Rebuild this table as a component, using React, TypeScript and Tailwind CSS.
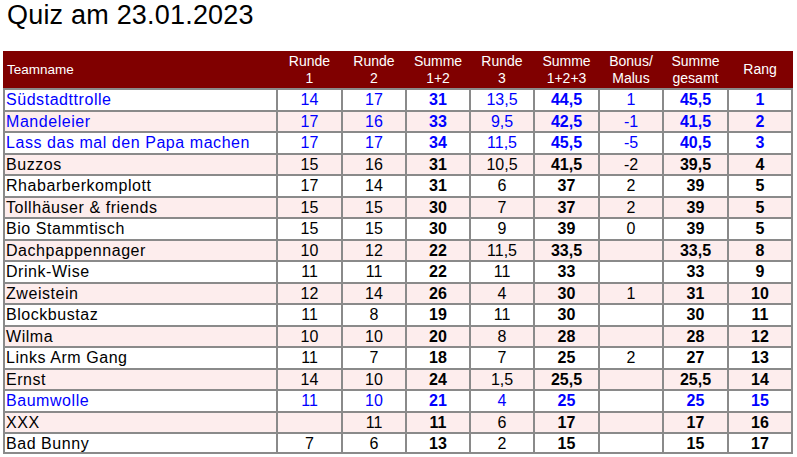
const rows: { name: string; v: string[]; blue?: boolean }[] = [
  { name: "Südstadttrolle", v: ["14", "17", "31", "13,5", "44,5", "1", "45,5", "1"], blue: true },
  { name: "Mandeleier", v: ["17", "16", "33", "9,5", "42,5", "-1", "41,5", "2"], blue: true },
  { name: "Lass das mal den Papa machen", v: ["17", "17", "34", "11,5", "45,5", "-5", "40,5", "3"], blue: true },
  { name: "Buzzos", v: ["15", "16", "31", "10,5", "41,5", "-2", "39,5", "4"] },
  { name: "Rhabarberkomplott", v: ["17", "14", "31", "6", "37", "2", "39", "5"] },
  { name: "Tollhäuser & friends", v: ["15", "15", "30", "7", "37", "2", "39", "5"] },
  { name: "Bio Stammtisch", v: ["15", "15", "30", "9", "39", "0", "39", "5"] },
  { name: "Dachpappennager", v: ["10", "12", "22", "11,5", "33,5", "", "33,5", "8"] },
  { name: "Drink-Wise", v: ["11", "11", "22", "11", "33", "", "33", "9"] },
  { name: "Zweistein", v: ["12", "14", "26", "4", "30", "1", "31", "10"] },
  { name: "Blockbustaz", v: ["11", "8", "19", "11", "30", "", "30", "11"] },
  { name: "Wilma", v: ["10", "10", "20", "8", "28", "", "28", "12"] },
  { name: "Links Arm Gang", v: ["11", "7", "18", "7", "25", "2", "27", "13"] },
  { name: "Ernst", v: ["14", "10", "24", "1,5", "25,5", "", "25,5", "14"] },
  { name: "Baumwolle", v: ["11", "10", "21", "4", "25", "", "25", "15"], blue: true },
  { name: "XXX", v: ["", "11", "11", "6", "17", "", "17", "16"] },
  { name: "Bad Bunny", v: ["7", "6", "13", "2", "15", "", "15", "17"] },
];

const headers = [
  ["Runde", "1"],
  ["Runde", "2"],
  ["Summe", "1+2"],
  ["Runde", "3"],
  ["Summe", "1+2+3"],
  ["Bonus/", "Malus"],
  ["Summe", "gesamt"],
  ["Rang"],
];

// bold: Summe-Spalten und Rang
const boldCols = [2, 4, 6, 7];
const cols = "grid grid-cols-[275px_65px_64px_64px_64px_65px_64px_65px_64px]";

export default function App() {
  return (
    <div className="min-h-screen bg-white font-['Liberation_Sans',Arial,sans-serif] text-black">
      <h1 className="pl-[7px] text-[27px] leading-[30px] tracking-[0.2px]">Quiz am 23.01.2023</h1>

      <div className="ml-[3px] mt-[21px] w-[790px]">
        <div className={`${cols} h-[37px] bg-[#800000] text-[14px] leading-[17px] text-white`}>
          <div className="flex items-center pl-[4px] text-[13.5px]">Teamname</div>
          {headers.map((h, i) => (
            <div key={i} className="flex flex-col items-center justify-center pr-[2px]">
              {h.map((t) => (
                <span key={t}>{t}</span>
              ))}
            </div>
          ))}
        </div>

        {rows.map((r, i) => (
          <div
            key={r.name}
            className={`${cols} h-[21.5px] border-t-2 border-[#8a8a8a] text-[16px] leading-[19px] ${
              i === rows.length - 1 ? "border-b-2" : ""
            } ${i % 2 === 1 ? "bg-[#fdeded]" : "bg-white"} ${r.blue ? "text-[#0000ff]" : "text-black"}`}
          >
            <div className="flex items-center border-x-2 border-[#8a8a8a] pl-[1px] tracking-[0.55px] whitespace-nowrap">
              {r.name}
            </div>
            {r.v.map((v, j) => (
              <div
                key={j}
                className={`flex items-center justify-center border-r-2 border-[#8a8a8a] ${
                  boldCols.includes(j) ? "font-bold" : ""
                }`}
              >
                {v}
              </div>
            ))}
          </div>
        ))}
      </div>
    </div>
  );
}
